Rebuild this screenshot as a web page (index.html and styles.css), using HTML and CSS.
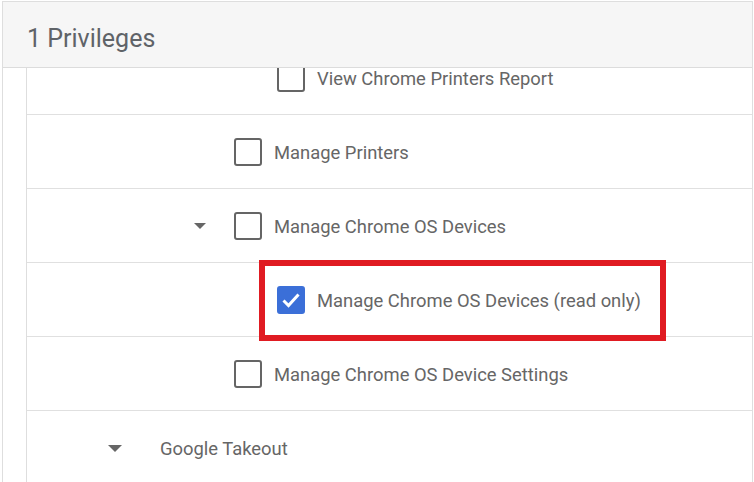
FILE: index.html
```html
<!DOCTYPE html>
<html lang="en">
<head>
<meta charset="utf-8">
<title>Privileges</title>
<link rel="stylesheet" href="styles.css">
</head>
<body>
<section class="card">
  <header class="card-head">1 Privileges</header>
  <div class="card-body">
    <div class="gutter"></div>
    <ul class="tree">
      <li class="row lvl3">
        <span class="check"></span><span class="label">View Chrome Printers Report</span>
      </li>
      <li class="row lvl2">
        <span class="check"></span><span class="label">Manage Printers</span>
      </li>
      <li class="row lvl2 has-toggle">
        <span class="toggle"></span><span class="check"></span><span class="label">Manage Chrome OS Devices</span>
      </li>
      <li class="row lvl3">
        <span class="highlight">
          <span class="check checked">
            <svg viewBox="0 0 24 24" width="24" height="24"><path d="M4.5 12.5l5 5L19.5 6.5" fill="none" stroke="#fff" stroke-width="3"/></svg>
          </span><span class="label">Manage Chrome OS Devices (read only)</span>
        </span>
      </li>
      <li class="row lvl2">
        <span class="check"></span><span class="label">Manage Chrome OS Device Settings</span>
      </li>
      <li class="row lvl1 has-toggle">
        <span class="toggle"></span><span class="label plain">Google Takeout</span>
      </li>
    </ul>
  </div>
</section>
</body>
</html>
```
FILE: styles.css
```css
* { box-sizing: border-box; }

html, body {
  margin: 0;
  padding: 0;
  background: #fff;
  font-family: Roboto, "Noto Sans", Arial, sans-serif;
}

.card {
  margin: 1px 1px 0 2px;
  height: 481px;
  border: 1px solid #dedede;
  border-bottom: none;
  display: flex;
  flex-direction: column;
  overflow: hidden;
}

.card-head {
  height: 66px;
  flex: none;
  background: #f6f6f6;
  border-bottom: 1px solid #dcdcdc;
  padding: 21px 0 0 24px;
  font-size: 25px;
  color: #5f6368;
  line-height: 32px;
}

.card-body {
  flex: 1;
  display: flex;
  overflow: hidden;
}

.gutter {
  width: 24px;
  flex: none;
  border-right: 1px solid #dedede;
}

.tree {
  list-style: none;
  margin: -27px 0 0 0;
  padding: 0;
  flex: 1;
}

.row {
  height: 74px;
  border-bottom: 1px solid #e0e0e0;
  display: flex;
  align-items: center;
  font-size: 18.4px;
  color: #666;
}

.lvl1 { padding-left: 81px; }
.lvl2 { padding-left: 207px; }
.lvl3 { padding-left: 250px; }
.lvl2.has-toggle { padding-left: 167px; }

.toggle {
  width: 0;
  height: 0;
  border-left: 7px solid transparent;
  border-right: 7px solid transparent;
  border-top: 7px solid #666;
  margin-top: 1px;
}

.lvl2 .toggle { margin-right: 28px; border-left-width: 6px; border-right-width: 6px; border-top-width: 6px; }
.lvl1 .toggle { margin-right: 38px; }

.check {
  width: 28px;
  height: 28px;
  border: 2.5px solid #656565;
  border-radius: 3px;
  flex: none;
  margin-right: 12px;
  display: flex;
  align-items: center;
  justify-content: center;
}

.check.checked {
  background: #3b6fd8;
  border-color: #3b6fd8;
}

.label {
  white-space: nowrap;
  line-height: 20px;
  margin-top: 2px;
}

.highlight {
  display: flex;
  align-items: center;
  height: 81px;
  margin-left: -18px;
  padding-left: 12px;
  width: 407px;
  border: 6px solid #e01b22;
  margin-top: 1px;
}
```
